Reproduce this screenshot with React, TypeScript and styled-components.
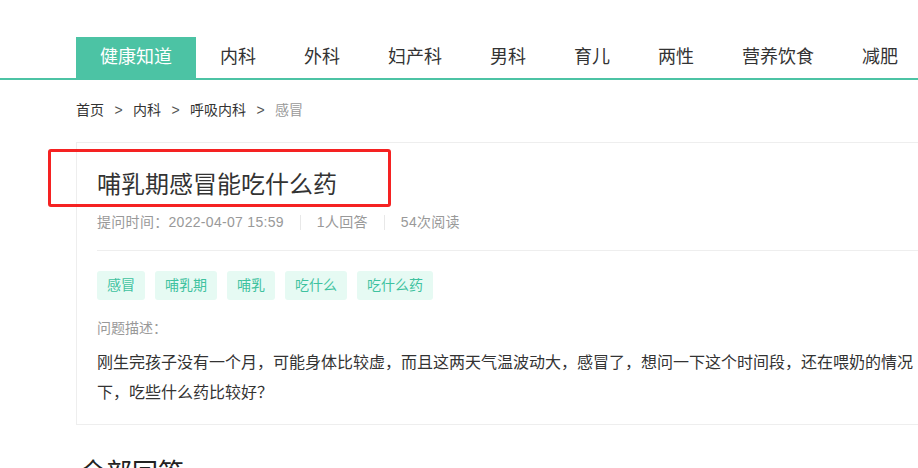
import React from "react";
import styled, { createGlobalStyle } from "styled-components";

const GlobalStyle = createGlobalStyle`
  html, body {
    margin: 0;
    padding: 0;
    background: #fff;
    overflow-x: hidden;
  }
  body {
    font-family: "Liberation Sans", "Noto Sans CJK SC", sans-serif;
    color: #333;
  }
  * { box-sizing: border-box; }
`;

const Page = styled.div`
  position: relative;
  width: 100%;
  min-height: 468px;
`;

const Nav = styled.nav`
  padding-top: 37px;
  border-bottom: 2px solid #4cc3a4;
  overflow: hidden;
`;

const TabList = styled.ul`
  display: flex;
  margin: 0;
  padding: 0 0 0 76px;
  list-style: none;
  white-space: nowrap;
`;

const Tab = styled.li<{ $active?: boolean }>`
  flex: none;
  height: 41px;
  line-height: 41px;
  padding: 0 24px;
  font-size: 18px;
  color: ${(p) => (p.$active ? "#fff" : "#333")};
  background: ${(p) => (p.$active ? "#4cc3a4" : "transparent")};
`;

const Main = styled.main`
  margin-left: 76px;
  width: 866px;
`;

const Crumbs = styled.div`
  display: flex;
  margin-top: 20px;
  font-size: 14px;
  line-height: 20px;
  white-space: nowrap;
`;

const Crumb = styled.span<{ $current?: boolean }>`
  color: ${(p) => (p.$current ? "#999" : "#333")};
`;

const CrumbSep = styled.span`
  width: 29px;
  text-align: center;
  color: #555;
`;

const Card = styled.section`
  margin-top: 22px;
  border: 1px solid #eee;
  padding: 24px 20px 16px;
`;

const Title = styled.h1`
  margin: 0;
  font-size: 24px;
  line-height: 36px;
  font-weight: normal;
  color: #333;
`;

const Meta = styled.div`
  display: flex;
  align-items: center;
  margin-top: 9px;
  font-size: 14px;
  line-height: 20px;
  color: #999;
  white-space: nowrap;
`;

const MetaItem = styled.span`
  letter-spacing: 0.3px;
`;

const MetaSep = styled.span`
  width: 1px;
  height: 15px;
  margin: 0 16px;
  background: #e8e8e8;
`;

const Divider = styled.div`
  height: 1px;
  margin-top: 18px;
  background: #eee;
`;

const Tags = styled.div`
  display: flex;
  gap: 10px;
  margin-top: 20px;
`;

const Tag = styled.span`
  height: 29px;
  line-height: 29px;
  padding: 0 10px;
  font-size: 14px;
  color: #3fc29f;
  background: #e6faf3;
  border-radius: 3px;
`;

const Label = styled.div`
  margin-top: 18px;
  font-size: 14px;
  line-height: 20px;
  color: #999;
`;

const Desc = styled.p`
  margin: 10px 0 0;
  font-size: 16px;
  line-height: 30px;
  color: #333;
`;

const SectionTitle = styled.h2`
  margin: 35px 0 0;
  padding-left: 4px;
  font-size: 26px;
  line-height: 26px;
  font-weight: normal;
  color: #222;
`;

const Highlight = styled.div`
  position: absolute;
  left: 48px;
  top: 149px;
  width: 343px;
  height: 58px;
  border: 3px solid #f52222;
  border-radius: 3px;
  pointer-events: none;
`;

const tabs = ["健康知道", "内科", "外科", "妇产科", "男科", "育儿", "两性", "营养饮食", "减肥"];
const tags = ["感冒", "哺乳期", "哺乳", "吃什么", "吃什么药"];

export default function App() {
  return (
    <Page>
      <GlobalStyle />
      <Nav>
        <TabList>
          {tabs.map((t, i) => (
            <Tab key={t} $active={i === 0}>
              {t}
            </Tab>
          ))}
        </TabList>
      </Nav>
      <Main>
        <Crumbs>
          <Crumb>首页</Crumb>
          <CrumbSep>&gt;</CrumbSep>
          <Crumb>内科</Crumb>
          <CrumbSep>&gt;</CrumbSep>
          <Crumb>呼吸内科</Crumb>
          <CrumbSep>&gt;</CrumbSep>
          <Crumb $current>感冒</Crumb>
        </Crumbs>
        <Card>
          <Title>哺乳期感冒能吃什么药</Title>
          <Meta>
            <MetaItem>提问时间：2022-04-07 15:59</MetaItem>
            <MetaSep />
            <MetaItem>1人回答</MetaItem>
            <MetaSep />
            <MetaItem>54次阅读</MetaItem>
          </Meta>
          <Divider />
          <Tags>
            {tags.map((t) => (
              <Tag key={t}>{t}</Tag>
            ))}
          </Tags>
          <Label>问题描述：</Label>
          <Desc>
            刚生完孩子没有一个月，可能身体比较虚，而且这两天气温波动大，感冒了，想问一下这个时间段，还在喂奶的情况下，吃些什么药比较好？
          </Desc>
        </Card>
        <SectionTitle>全部回答</SectionTitle>
      </Main>
      <Highlight />
    </Page>
  );
}
